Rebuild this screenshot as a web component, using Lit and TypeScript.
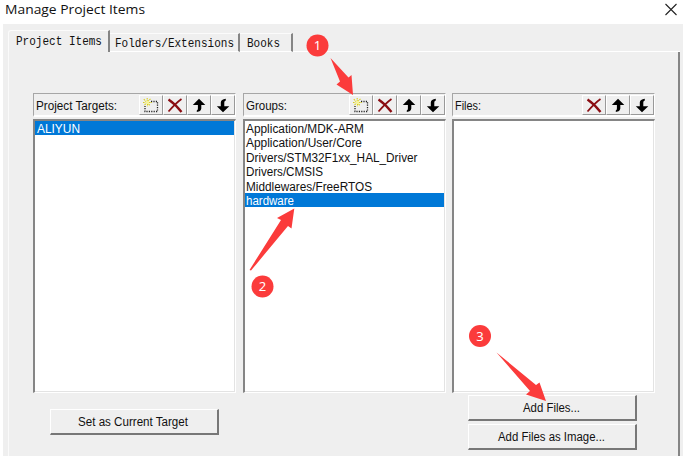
import { LitElement, html, css, svg } from "lit";
import { customElement } from "lit/decorators.js";

const label = (text: string, width: number, kind = "") => html`
  <svg class="label ${kind}" width=${width + 2} height="16">
    <text x="0" y="12" textLength=${width} lengthAdjust="spacingAndGlyphs">${text}</text>
  </svg>`;

const icons: Record<string, unknown> = {
  add: svg`<path d="M8 3.500H14.500V13.500H2V8" fill="none" stroke="#222" stroke-width="1.300" stroke-dasharray="1.200 1.200"/>
    <path d="M.8 1.200L7 7.500M7.500 .8L1 7.500M4.200 0v3M0 4.500h2.500M4.500 6v2.500M6 4.500h3" stroke="#d9cf1c" stroke-width="1.100" stroke-dasharray="1.600 .7"/>
    <path d="M3 3h3v3h-3z" fill="#f6f29a"/>`,
  remove: svg`<path d="M1.500 1.500C6 4.500 11 9.500 14.500 14" fill="none" stroke="#8b0d12" stroke-width="2.300"/>
    <path d="M14.500 1C9 5 5 9.500 1.500 13.500" fill="none" stroke="#8b0d12" stroke-width="1.700"/>`,
  up: svg`<path d="M8 .8L14.300 7H10.300V10.500Q10 13.500 5.800 14V12.500Q7 12 6.900 10.500V7H1.800Z" fill="#000"/>`,
  down: svg`<path d="M8 14.200L1.800 8.200H5.800V4.500Q6 1.500 10.800 .8V2.500Q9.200 3 9.300 4.500V8.200H14.300Z" fill="#000"/>`,
};

const columns = [
  { title: "Project Targets:", w: 81, tools: ["add", "remove", "up", "down"], rows: [["ALIYUN", 43]], selected: 0 },
  {
    title: "Groups:", w: 41, tools: ["add", "remove", "up", "down"], selected: 5,
    rows: [["Application/MDK-ARM", 118], ["Application/User/Core", 116], ["Drivers/STM32F1xx_HAL_Driver", 171.5],
      ["Drivers/CMSIS", 77], ["Middlewares/FreeRTOS", 126], ["hardware", 48]],
  },
  { title: "Files:", w: 26, tools: ["remove", "up", "down"], rows: [], selected: -1 },
] as { title: string; w: number; tools: string[]; rows: [string, number][]; selected: number }[];

@customElement("app-root")
export class AppRoot extends LitElement {
  static styles = css`
    :host { display: block; position: relative; width: 683px; height: 456px; overflow: hidden; background: #fff;
      font-family: "Liberation Sans", sans-serif; font-size: 12px; color: #111; }
    * { box-sizing: border-box; }
    svg { display: block; overflow: visible; flex: none; }
    .label { fill: #111; }
    .title { font: 12.500px "Open Sans", sans-serif; }
    .tabtext { font: 12.500px "Liberation Mono", monospace; }
    .light { fill: #fff; }
    header { height: 24px; padding: 2px 6px 0 4.500px; display: flex; justify-content: space-between; }
    .close { margin-top: -.5px; }
    .body { margin-left: 3px; height: 432px; background: #efefef; padding: 6px 3px 0 5px; }
    .tabs { display: flex; height: 22px; align-items: flex-end; }
    .tab { height: 19px; border-top: 1px solid #fbfbfb; border-right: 2px solid #858585; padding: 1px 0 0 5px;
      border-bottom: 1px solid #fff; }
    .tab.active { height: 22px; width: 102px; border-left: 1px solid #fbfbfb; border-bottom: 0; padding: 2px 0 0 7px;
      border-top-left-radius: 3px; }
    .tab.ext { width: 130px; padding-left: 4.500px; }
    .tab.books { width: 53px; padding-left: 6.500px; }
    .rest { flex: 1; border-bottom: 1px solid #fff; }
    .pane { height: 404px; border-left: 1px solid #fafafa; border-right: 2px solid #858585; padding: 41px 0 0 24px; }
    .columns { display: grid; grid-template-columns: 203px 203px 203px; column-gap: 6.500px; }
    .bar { height: 24px; border: 1px solid #a6a6a6; border-right-color: #fff; border-bottom: 2px solid #fff;
      display: flex; justify-content: space-between; padding: 1px 0 0 2px; }
    .caption { padding-top: 3px; }
    .tools { display: flex; }
    .tool { width: 24px; height: 20px; border: 1px solid #fff; border-right-color: #999; border-bottom-color: #999;
      padding: 2px 0 0 3px; }
    .list { height: 274px; margin-top: 2px; border: 1px solid #fff; border-top: 2px solid #858585; border-left: 2px solid #858585;
      background: #fff; box-shadow: inset -1px -1px #e3e3e3; padding-right: 1px; }
    .row { height: 14.400px; padding-left: 2px; }
    .row.sel { background: #0078d7; }
    .row .label { margin-left: -.5px; }
    .actions { display: flex; justify-content: space-between; padding: 2px 41px 0 17px; }
    .stack { display: grid; gap: 3px; }
    .button { width: 169px; height: 26px; border: 1px solid #fff; border-right: 2px solid #777; border-bottom: 2px solid #777;
      display: flex; justify-content: center; padding-top: 4px; }
    .set { margin-top: 14px; }
    .notes { position: absolute; left: 0; top: 0; fill: #fb3b3b; }
    .num { fill: #fff; font: 13px "Noto Sans", sans-serif; text-anchor: middle; }
  `;

  render() {
    return html`
      <header>
        ${label("Manage Project Items", 140, "title")}
        <svg class="close" width="12" height="16"><path d="M.5 2l11 11M11.500 2L.5 13" stroke="#222" stroke-width="1.100"/></svg>
      </header>
      <div class="body">
        <div class="tabs">
          <div class="tab active">${label("Project Items", 86, "tabtext")}</div>
          <div class="tab ext">${label("Folders/Extensions", 119, "tabtext")}</div>
          <div class="tab books">${label("Books", 33, "tabtext")}</div>
          <div class="rest"></div>
        </div>
        <div class="pane">
          <div class="columns">
            ${columns.map((c) => html`
              <section>
                <div class="bar">
                  <div class="caption">${label(c.title, c.w)}</div>
                  <div class="tools">${c.tools.map((t) => html`<div class="tool"><svg width="17" height="16">${icons[t]}</svg></div>`)}</div>
                </div>
                <div class="list">
                  ${c.rows.map(([text, w], i) => html`<div class="row ${i === c.selected ? "sel" : ""}">${label(text, w, i === c.selected ? "light" : "")}</div>`)}
                </div>
              </section>`)}
          </div>
          <div class="actions">
            <div class="button set">${label("Set as Current Target", 110)}</div>
            <div class="stack">
              <div class="button">${label("Add Files...", 57)}</div>
              <div class="button">${label("Add Files as Image...", 107)}</div>
            </div>
          </div>
        </div>
      </div>
      <svg class="notes" width="683" height="456">
        <path d="M330.500 58L348.500 77.500L351.500 75L353 95L336.500 84.500L340 81.500Z"/>
        <path d="M294.300 208.500L291.500 228.500L288 226L251 270.500L249.500 270L281 220L277 218Z"/>
        <path d="M496.500 352.500L536 385L539.500 382.500L546 401L526 394.500L530 391Z"/>
        <circle cx="317.500" cy="45.500" r="11"/><circle cx="262.500" cy="286.500" r="11"/><circle cx="480" cy="336" r="11"/>
        <text class="num" x="317.500" y="50">1</text><text class="num" x="262.500" y="291">2</text><text class="num" x="480" y="340.500">3</text>
      </svg>`;
  }
}
